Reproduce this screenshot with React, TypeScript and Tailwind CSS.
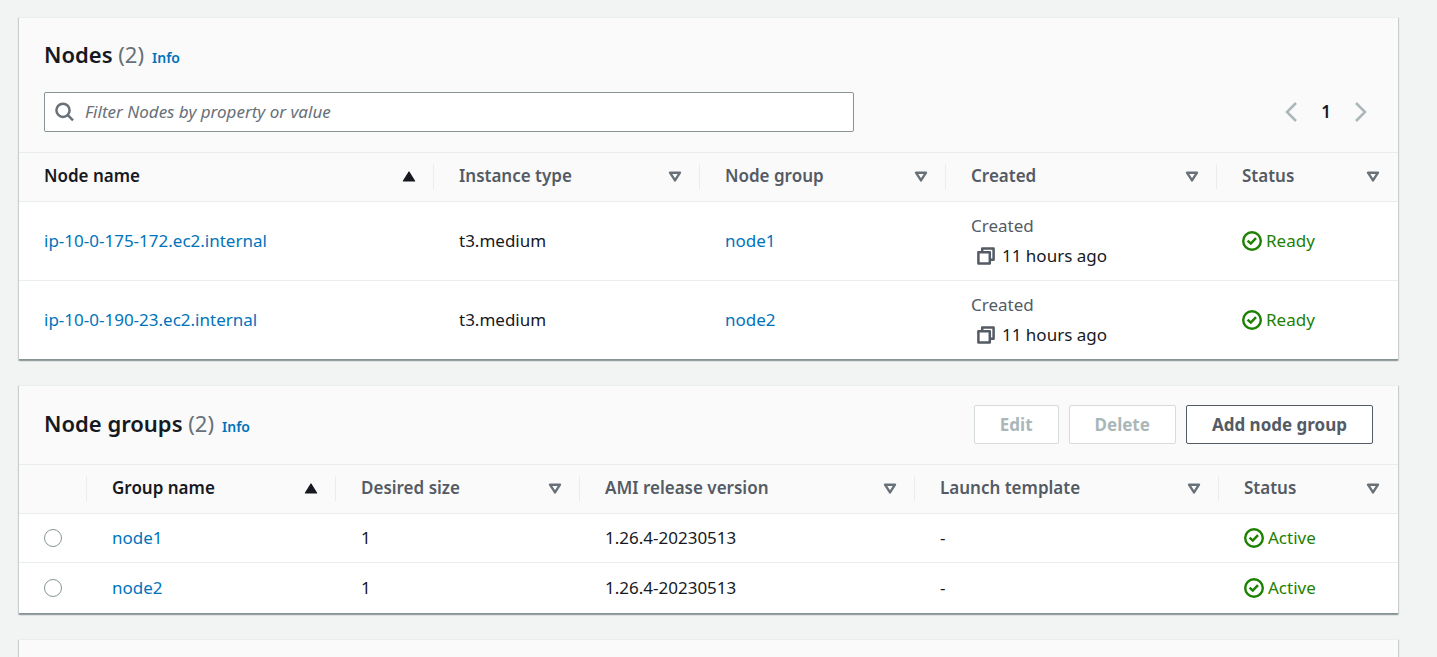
import type { ReactNode } from "react";

function SortIcon({ active }: { active?: boolean }) {
  return active ? (
    <svg viewBox="0 0 14 12" className="h-3 w-3.5 shrink-0" aria-hidden="true">
      <path d="M7 2 12.6 11H1.4Z" fill="#16191f" stroke="#16191f" strokeWidth="1.2" strokeLinejoin="round" />
    </svg>
  ) : (
    <svg viewBox="0 0 14 12" className="h-3 w-3.5 shrink-0" aria-hidden="true">
      <path d="M2 2.7H12L7 10.4Z" fill="none" stroke="#687078" strokeWidth="2.4" strokeLinejoin="round" />
    </svg>
  );
}

function CheckIcon() {
  return (
    <svg viewBox="0 0 20 20" className="size-5 shrink-0" fill="none" stroke="#1d8102" aria-hidden="true">
      <circle cx="10" cy="10" r="8.8" strokeWidth="2.4" />
      <path d="M5.6 9.6 8.8 12.6 14 7.2" strokeWidth="2.5" />
    </svg>
  );
}

function CopyIcon() {
  return (
    <svg viewBox="0 0 18 18" className="size-[18px]" fill="none" stroke="#545b64" strokeWidth="2.5" strokeLinejoin="round" aria-hidden="true">
      <path d="M1.4 5.2H12.8V16.6H1.4Z" />
      <path d="M5.2 5V1.4H16.6V12.8H13" />
    </svg>
  );
}

function Arrow({ d }: { d: string }) {
  return (
    <svg viewBox="0 0 12 20" className="h-5 w-3" fill="none" stroke="#aab7b8" strokeWidth="2.5" aria-hidden="true">
      <path d={d} />
    </svg>
  );
}

function Card({ children }: { children?: ReactNode }) {
  return (
    <section className="min-h-20 border-t border-b border-t-[#eaeded] border-b-[#879596] bg-[#fafafa] shadow-[0_1px_1px_0_rgba(0,28,36,0.15),1px_1px_1px_0_rgba(0,28,36,0.15),-1px_1px_1px_0_rgba(0,28,36,0.15)]">
      {children}
    </section>
  );
}

function Title({ text, count }: { text: string; count: number }) {
  return (
    <div className="flex items-baseline gap-2">
      <h2 className="text-[22px] leading-9 font-semibold text-[#16191f]">
        {text} <span className="font-normal text-[#687078]">({count})</span>
      </h2>
      <a href="#info" className="text-sm font-semibold text-[#0073bb]">Info</a>
    </div>
  );
}

function HeadCell({ label, active, last }: { label: string; active?: boolean; last?: boolean }) {
  return (
    <th scope="col" aria-sort={active ? "ascending" : undefined} className="h-[49px] px-0 pt-0 pb-0.5 text-left font-semibold">
      <div className={last ? "border-r border-transparent pr-[17px] pl-[25px]" : "border-r border-[#eaeded] pr-[17px] pl-[25px]"}>
        <button
          type="button"
          className={
            active
              ? "flex h-[25px] w-full items-center justify-between font-semibold whitespace-nowrap text-[#16191f]"
              : "flex h-[25px] w-full items-center justify-between font-semibold whitespace-nowrap text-[#545b64]"
          }
        >
          {label}
          <SortIcon active={active} />
        </button>
      </div>
    </th>
  );
}

function Status({ text }: { text: string }) {
  return (
    <span className="flex items-center gap-1 text-[#1d8102]">
      <CheckIcon />
      {text}
    </span>
  );
}

const nodes = [
  { name: "ip-10-0-175-172.ec2.internal", type: "t3.medium", group: "node1", age: "11 hours ago" },
  { name: "ip-10-0-190-23.ec2.internal", type: "t3.medium", group: "node2", age: "11 hours ago" },
];

const groups = [
  { name: "node1", size: 1, version: "1.26.4-20230513", template: "-" },
  { name: "node2", size: 1, version: "1.26.4-20230513", template: "-" },
];

const tableClass = "w-full table-fixed border-collapse border-t border-[#eaeded] text-[17px] leading-[30px]";
const rowClass = "border-t border-[#eaeded] bg-white text-[#16191f]";
const cellClass = "py-0 pr-4 pl-[25px] whitespace-nowrap";
const linkClass = "text-[#0073bb] hover:underline";
const disabledButton = "h-[39px] rounded-xs border border-[#d5dbdb] bg-white px-[25px] font-bold text-[#aab7b8]";

function NodesCard() {
  return (
    <Card>
      <div className="px-[25px] pt-[18px] pb-5">
        <Title text="Nodes" count={2} />
        <div className="mt-5 flex items-center justify-between gap-6">
          <label className="flex h-10 max-w-[810px] flex-1 items-center gap-2.5 rounded-xs border border-[#879596] bg-white px-2.5">
            <svg viewBox="0 0 20 20" className="size-5 shrink-0" fill="none" stroke="#687078" strokeWidth="2.5" aria-hidden="true">
              <circle cx="8" cy="8.3" r="6.6" />
              <path d="M12.8 13.1 18 18.3" />
            </svg>
            <input
              type="search"
              aria-label="Filter Nodes"
              placeholder="Filter Nodes by property or value"
              className="w-full bg-transparent text-[17px] text-[#16191f] outline-none placeholder:text-[#687078] placeholder:italic"
            />
          </label>
          <nav aria-label="Pagination" className="flex items-center gap-[19px] pr-1.5">
            <button type="button" disabled aria-label="Previous page"><Arrow d="M11 1 2 10 11 19" /></button>
            <button type="button" className="w-5 text-[17px] font-semibold text-[#16191f]">1</button>
            <button type="button" disabled aria-label="Next page"><Arrow d="M1 1 10 10 1 19" /></button>
          </nav>
        </div>
      </div>
      <table className={tableClass}>
        <colgroup>
          <col className="w-[415px]" />
          <col className="w-[266px]" />
          <col className="w-[246px]" />
          <col className="w-[271px]" />
          <col className="w-[181px]" />
        </colgroup>
        <thead>
          <tr>
            <HeadCell label="Node name" active />
            <HeadCell label="Instance type" />
            <HeadCell label="Node group" />
            <HeadCell label="Created" />
            <HeadCell label="Status" last />
          </tr>
        </thead>
        <tbody>
          {nodes.map((n) => (
            <tr key={n.name} className={rowClass}>
              <td className={cellClass}><a href="#node" className={linkClass}>{n.name}</a></td>
              <td className={cellClass}>{n.type}</td>
              <td className={cellClass}><a href="#group" className={linkClass}>{n.group}</a></td>
              <td className={cellClass}>
                <div className="py-[9px]">
                  <div className="text-[#545b64]">Created</div>
                  <div className="flex items-center gap-[7px] pl-1.5">
                    <button type="button" aria-label="Copy timestamp"><CopyIcon /></button>
                    {n.age}
                  </div>
                </div>
              </td>
              <td className={cellClass}><Status text="Ready" /></td>
            </tr>
          ))}
        </tbody>
      </table>
    </Card>
  );
}

function GroupsCard() {
  return (
    <Card>
      <div className="flex items-start justify-between px-[25px] pt-[19px] pb-5">
        <Title text="Node groups" count={2} />
        <div className="flex gap-2.5 text-[17px]">
          <button type="button" disabled className={disabledButton}>Edit</button>
          <button type="button" disabled className={disabledButton}>Delete</button>
          <button type="button" className="h-[39px] rounded-xs border border-[#545b64] bg-white px-[25px] font-bold text-[#545b64]">
            Add node group
          </button>
        </div>
      </div>
      <table className={tableClass}>
        <colgroup>
          <col className="w-[68px]" />
          <col className="w-[249px]" />
          <col className="w-[244px]" />
          <col className="w-[335px]" />
          <col className="w-[304px]" />
          <col className="w-[179px]" />
        </colgroup>
        <thead>
          <tr>
            <td className="px-0 pt-0 pb-0.5"><div className="h-[25px] border-r border-[#eaeded]" /></td>
            <HeadCell label="Group name" active />
            <HeadCell label="Desired size" />
            <HeadCell label="AMI release version" />
            <HeadCell label="Launch template" />
            <HeadCell label="Status" last />
          </tr>
        </thead>
        <tbody>
          {groups.map((g) => (
            <tr key={g.name} className={`${rowClass} h-[49px] last:h-[50px]`}>
              <td className="py-0 pl-[25px]">
                <input
                  type="radio"
                  name="group"
                  aria-label={g.name}
                  className="block size-[18px] appearance-none rounded-full border border-[#879596] bg-white checked:border-[5px] checked:border-[#0073bb]"
                />
              </td>
              <td className={cellClass}><a href="#group" className={linkClass}>{g.name}</a></td>
              <td className={cellClass}>{g.size}</td>
              <td className={cellClass}>{g.version}</td>
              <td className={cellClass}>{g.template}</td>
              <td className={cellClass}><Status text="Active" /></td>
            </tr>
          ))}
        </tbody>
      </table>
    </Card>
  );
}

export default function App() {
  return (
    <main className="flex h-screen flex-col gap-[25px] overflow-hidden bg-[#f2f3f3] pt-[17px] pr-[39px] pl-[19px] font-['Noto_Sans',sans-serif] *:shrink-0">
      <NodesCard />
      <GroupsCard />
      <Card />
    </main>
  );
}
